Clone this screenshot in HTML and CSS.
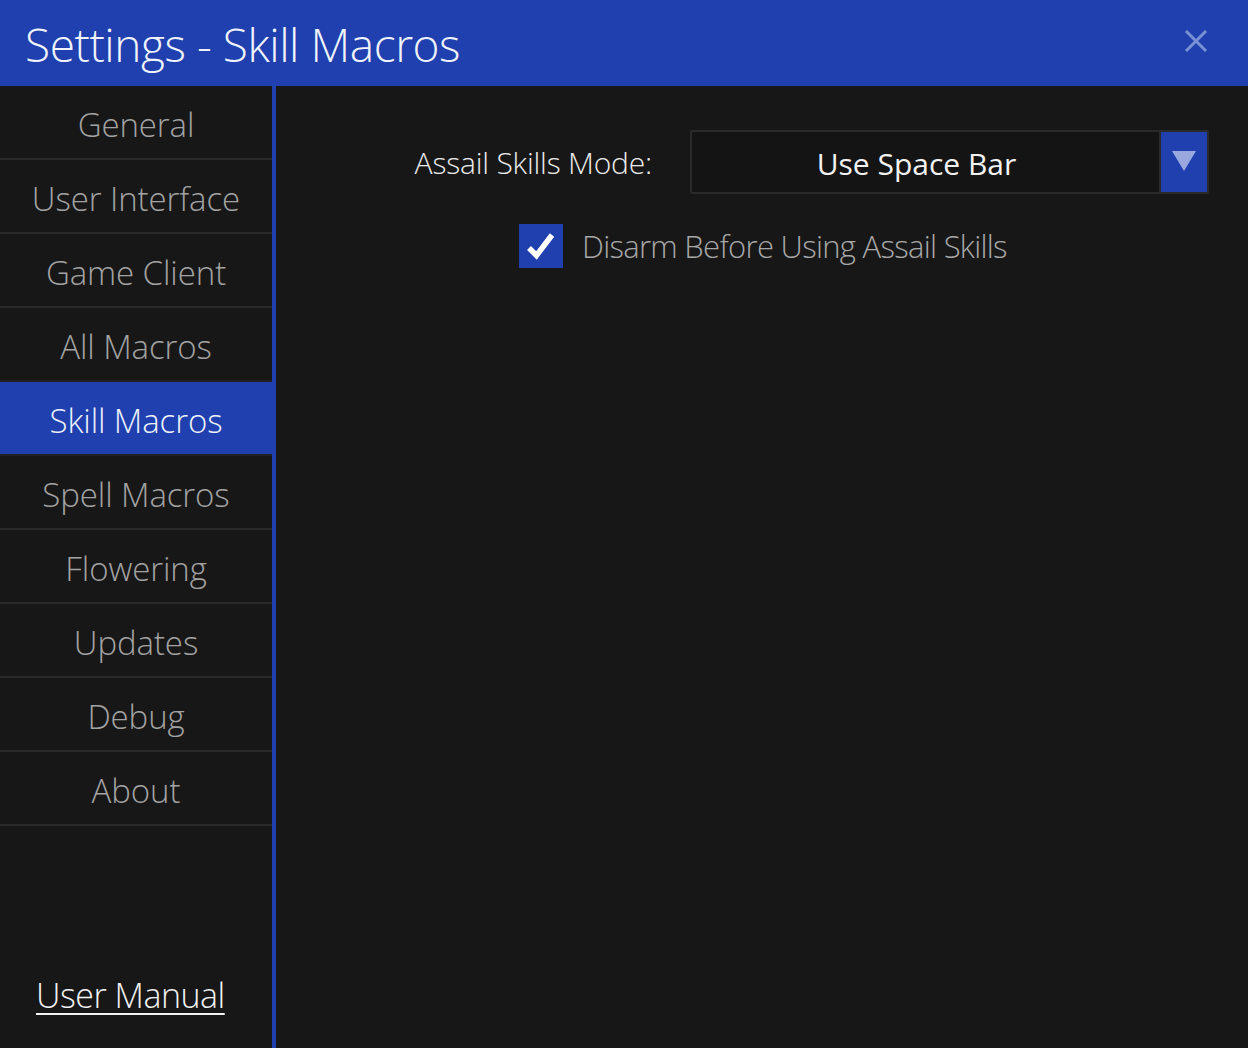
FILE: index.html
```html
<!DOCTYPE html>
<html>
<head>
<meta charset="utf-8">
<link rel="stylesheet" href="styles.css">
</head>
<body>
<div class="window">
  <header class="titlebar">
    <h1 class="title">Settings - Skill Macros</h1>
    <button class="close" aria-label="Close">
      <svg width="24" height="24" viewBox="0 0 24 24"><path d="M2 2L22 22M22 2L2 22" stroke="#7b91d6" stroke-width="3" fill="none"/></svg>
    </button>
  </header>
  <div class="body">
    <nav class="sidebar">
      <ul class="menu">
        <li class="item">General</li>
        <li class="item">User Interface</li>
        <li class="item">Game Client</li>
        <li class="item">All Macros</li>
        <li class="item active">Skill Macros</li>
        <li class="item">Spell Macros</li>
        <li class="item">Flowering</li>
        <li class="item">Updates</li>
        <li class="item">Debug</li>
        <li class="item">About</li>
      </ul>
      <a class="manual" href="#">User Manual</a>
    </nav>
    <main class="content">
      <div class="field">
        <label class="label">Assail Skills Mode:</label>
        <div class="select">
          <span class="select-value">Use Space Bar</span>
          <span class="select-btn">
            <svg width="24" height="20" viewBox="0 0 24 20"><path d="M0 0H24L12 20Z" fill="#9aa8e0"/></svg>
          </span>
        </div>
      </div>
      <div class="check-row">
        <span class="checkbox">
          <svg width="44" height="44" viewBox="0 0 44 44"><path d="M10 24L17.5 31.5L33 11" stroke="#ffffff" stroke-width="5.5" fill="none" stroke-linejoin="miter" stroke-linecap="butt"/></svg>
        </span>
        <span class="check-label">Disarm Before Using Assail Skills</span>
      </div>
    </main>
  </div>
</div>
</body>
</html>
```

FILE: styles.css
```css
* { box-sizing: border-box; }
html, body { margin: 0; padding: 0; }
body {
  background: #171717;
  font-family: "Open Sans", "Noto Sans", sans-serif;
  font-weight: 300;
  width: 1248px;
  height: 1048px;
  overflow: hidden;
}
.window {
  display: flex;
  flex-direction: column;
  height: 1048px;
}
.titlebar {
  height: 86px;
  flex: none;
  background: #1f40ae;
  display: flex;
  align-items: center;
  justify-content: space-between;
  padding: 0 40px 0 25px;
}
.title {
  margin: 0;
  color: #f0f3fb;
  font-weight: 300;
  font-size: 46px;
  letter-spacing: -0.45px;
  line-height: 1;
  padding-top: 2px;
}
.close {
  background: none;
  border: 0;
  padding: 0;
  width: 24px;
  height: 24px;
  display: flex;
  margin-top: -4px;
}
.body {
  flex: 1;
  display: flex;
  min-height: 0;
}
.sidebar {
  width: 276px;
  flex: none;
  border-right: 4px solid #1f40ae;
  display: flex;
  flex-direction: column;
}
.menu {
  list-style: none;
  margin: 0;
  padding: 0;
}
.item {
  height: 74px;
  border-bottom: 2px solid #2a2a2a;
  display: flex;
  align-items: center;
  justify-content: center;
  color: #a3a3a3;
  font-size: 33px;
  letter-spacing: -0.1px;
  padding-top: 4px;
}
.item.active {
  background: #1f40ae;
  color: #eef1fb;
  border-top: 2px solid #202020;
  border-bottom-color: #202020;
  margin-top: -2px;
  height: 76px;
}
.manual {
  margin-top: auto;
  margin-bottom: 30px;
  margin-left: 36px;
  color: #f2f2f2;
  font-size: 34px;
  letter-spacing: -0.5px;
  text-decoration: underline;
  text-decoration-thickness: 2px;
  text-underline-offset: 5px;
  align-self: flex-start;
}
.content {
  flex: 1;
  padding: 44px 39px 0 0;
  display: flex;
  flex-direction: column;
}
.field {
  display: flex;
  align-items: center;
  justify-content: flex-end;
}
.label {
  color: #ececec;
  font-size: 30px;
  letter-spacing: -0.2px;
  margin-right: 38px;
  padding-top: 0px;
}
.select {
  width: 519px;
  height: 64px;
  border: 2px solid #2a2a2a;
  border-radius: 2px;
  background: #141414;
  display: flex;
  align-items: stretch;
}
.select-value {
  flex: 1;
  display: flex;
  align-items: center;
  justify-content: center;
  color: #f2f2f2;
  font-weight: 400;
  font-size: 30px;
  letter-spacing: 0px;
  padding-top: 2px;
  padding-right: 18px;
}
.select-btn {
  width: 48px;
  background: #1f40ae;
  border-left: 2px solid #2a2a2a;
  display: flex;
  align-items: center;
  justify-content: center;
  padding-bottom: 2px;
}
.check-row {
  display: flex;
  align-items: center;
  margin-top: 30px;
  margin-left: 243px;
}
.checkbox {
  width: 44px;
  height: 44px;
  background: #1f40ae;
  display: flex;
  flex: none;
}
.check-label {
  margin-left: 19px;
  color: #a8a8a8;
  font-size: 31px;
  letter-spacing: -0.7px;
  padding-top: 0px;
}
```
